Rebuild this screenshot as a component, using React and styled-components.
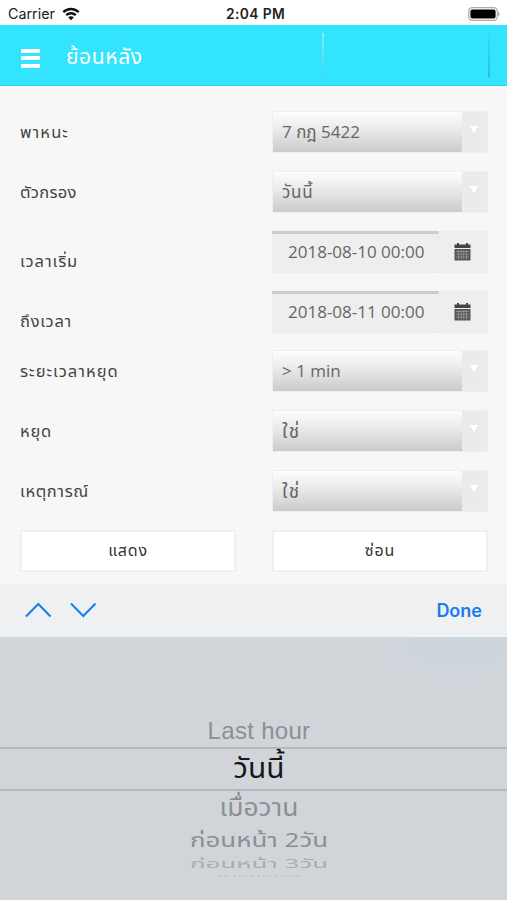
import React from "react";
import styled, { createGlobalStyle } from "styled-components";

const GlobalStyle = createGlobalStyle`
  * {
    box-sizing: border-box;
  }
  body {
    margin: 0;
    background: #f7f7f7;
    overflow: hidden;
  }
`;

const Screen = styled.div`
  display: flex;
  flex-direction: column;
  width: 507px;
  height: 900px;
  overflow: hidden;
  background: #f7f7f7;
  font-family: "Open Sans", "Noto Sans Thai", sans-serif;
`;

const StatusBar = styled.div`
  display: grid;
  grid-template-columns: 1fr auto 1fr;
  align-items: center;
  height: 25px;
  padding: 2px 7px 0 8px;
  background: #fff;
  color: #222;
  font-family: Inter, sans-serif;
  font-size: 14.3px;
  line-height: 20px;
`;

const Carrier = styled.div`
  display: flex;
  align-items: center;
  gap: 7px;
`;

const Clock = styled.div`
  padding-left: 3px;
  font-size: 13.8px;
  font-weight: 600;
  letter-spacing: 0.4px;
`;

const Battery = styled.svg`
  justify-self: end;
`;

const Header = styled.header`
  display: flex;
  align-items: center;
  height: 61px;
  padding: 0 17px 0 21px;
  background: #33e4ff;
  border-bottom: 1px solid #27d3ef;
`;

const MenuButton = styled.div`
  display: flex;
  flex-direction: column;
  gap: 3.5px;
  margin-top: 6px;

  span {
    width: 19px;
    height: 4px;
    background: #fff;
  }
`;

const Title = styled.h1`
  flex: 1;
  margin: 4px 0 0 26px;
  color: #fff;
  font-size: 21px;
  font-weight: 400;
  letter-spacing: 0.6px;
`;

const Divider = styled.span`
  width: 2px;
  height: 44px;
  margin-right: ${(props) => props.$gap || 0}px;
  background: linear-gradient(${(props) => props.$from}, ${(props) => props.$to});
`;

const Form = styled.main`
  height: 498px;
  padding: 25px 19px 0 20px;
`;

const Row = styled.div`
  display: grid;
  grid-template-columns: 216px 216px;
  column-gap: 36px;
  height: 59.85px;
`;

const Label = styled.label`
  padding-top: ${(props) => (props.$low ? 18 : 9)}px;
  color: #444;
  font-size: 16.5px;
  letter-spacing: ${(props) => props.$tracking}px;
  line-height: 24px;
  white-space: nowrap;
`;

const SelectBox = styled.div`
  display: flex;
  height: 42px;
  background: #ebebeb;
  border: 1px solid #efefef;
`;

const SelectValue = styled.div`
  width: 189px;
  padding-left: 9px;
  background: linear-gradient(#fdfdfd, #e9e9e9 45%, #cbcbcb);
  color: #666;
  font-size: ${(props) => props.$size || 17}px;
  letter-spacing: ${(props) => props.$tracking || 0}px;
  line-height: 40px;
`;

const Arrow = styled.svg`
  margin: 14px 0 0 6px;
`;

const DateBox = styled.div`
  display: flex;
  height: 42px;
  background: #eee;
`;

const DateValue = styled.div`
  width: 167px;
  padding-left: 16px;
  background: #eee;
  border-top: 3px solid #ccc;
  border-right: 1px solid #eaeaea;
  color: #666;
  font-size: 17px;
  line-height: 35px;
  white-space: nowrap;

  span {
    display: block;
    width: 137px;
    overflow: hidden;
  }
`;

const Calendar = styled.svg`
  margin: 11px 0 0 15px;
`;

const Button = styled.button`
  height: 42px;
  padding: 0;
  background: #fff;
  border: 2px solid #f0f0f0;
  color: #333;
  font-family: inherit;
  font-size: 16px;
  letter-spacing: 0.8px;
`;

const Toolbar = styled.div`
  display: flex;
  align-items: center;
  height: 53px;
  padding: 0 25px;
  background: #eef0f2;
  color: #1a7cee;
`;

const Chevron = styled.svg`
  margin: -2px 18px 0 0;
`;

const Done = styled.div`
  margin-left: auto;
  font-family: Inter, sans-serif;
  font-size: 18px;
  font-weight: 600;
`;

const Picker = styled.div`
  display: flex;
  flex-direction: column;
  align-items: center;
  flex: 1;
  padding-top: 78px;
  background:
    radial-gradient(ellipse 100px 50px at 460px 0, #cad5dd, transparent),
    #d1d5da;
`;

const Option = styled.div`
  display: flex;
  align-items: center;
  justify-content: center;
  width: 100%;
  height: ${(props) => props.$height}px;
  padding-left: 11px;
  color: ${(props) => props.$color || "#8b8f94"};
  font-size: ${(props) => props.$size}px;
  white-space: nowrap;

  span {
    transform: scale(${(props) => props.$x || 1}, ${(props) => props.$y || 1});
  }
`;

const Latin = styled(Option)`
  font-family: "Liberation Sans", Arial, sans-serif;
  letter-spacing: 0.3px;
`;

const Selected = styled(Option)`
  border-top: 2px solid #b5b8be;
  border-bottom: 2px solid #b5b8be;
`;

const Select = ({ value, size, tracking }) => (
  <SelectBox>
    <SelectValue $size={size} $tracking={tracking}>
      {value}
    </SelectValue>
    <Arrow width="12" height="12" viewBox="0 0 12 12">
      <path d="M1.5 1H10.5L6 9Z" fill="#dcdcdc" />
      <path d="M1.5 0H10.5L6 8Z" fill="#fff" />
    </Arrow>
  </SelectBox>
);

const DateInput = ({ value }) => (
  <DateBox>
    <DateValue>
      <span>{value}</span>
    </DateValue>
    <Calendar width="17" height="19" viewBox="0 0 17 19">
      <path d="M0.5 2.5H3V1H5V2.5H12V1H14V2.5H16.5V6H0.5Z" fill="#444" />
      <path d="M0.5 7H16.5V18.5H0.5Z" fill="#555" />
      <path
        d="M2 9.5H15M2 12.2H15M2 15H15M4.5 8V17.5M7.2 8V17.5M9.8 8V17.5M12.5 8V17.5"
        stroke="#aaa"
        strokeWidth="0.6"
      />
    </Calendar>
  </DateBox>
);

const fields = [
  { label: "พาหนะ", tracking: 1.1, value: "7 กฎ 5422" },
  { label: "ตัวกรอง", tracking: 0.3, value: "วันนี้", spread: 0.7 },
  { label: "เวลาเริ่ม", tracking: 0.9, value: "2018-08-10 00:00", date: true },
  { label: "ถึงเวลา", tracking: 0.7, value: "2018-08-11 00:00", date: true },
  { label: "ระยะเวลาหยุด", tracking: 1, value: "> 1 min" },
  { label: "หยุด", tracking: 0.7, value: "ใช่", size: 19, spread: 1.5 },
  { label: "เหตุการณ์", tracking: 0.6, value: "ใช่", size: 19, spread: 1.5 },
];

const App = () => (
  <>
    <GlobalStyle />
    <Screen>
      <StatusBar>
        <Carrier>
          Carrier
          <svg width="18" height="14" viewBox="0 0 18 14">
            <g fill="none" stroke="#111" strokeWidth="2.4">
              <path d="M1.3 5.2C5.6 0.9 12.4 0.9 16.7 5.2" />
              <path d="M4.2 8.2C6.9 5.6 11.1 5.6 13.8 8.2" />
            </g>
            <path d="M6.2 10.3C7.8 8.9 10.2 8.9 11.8 10.3L9 13.2Z" fill="#111" />
          </svg>
        </Carrier>
        <Clock>2:04 PM</Clock>
        <Battery width="32" height="14" viewBox="0 0 32 14">
          <rect x="0.7" y="0.7" width="28.6" height="12.6" rx="3.6" fill="#fff" stroke="#aaa" strokeWidth="1.2" />
          <rect x="2.4" y="2.4" width="25.2" height="9.2" rx="2" fill="#000" />
          <path d="M30.3 4.8C32 5.5 32 8.5 30.3 9.2Z" fill="#999" />
        </Battery>
      </StatusBar>

      <Header>
        <MenuButton>
          <span />
          <span />
          <span />
        </MenuButton>
        <Title>ย้อนหลัง</Title>
        <Divider $gap={164} $from="#7deeff" $to="#4ad4ea" />
        <Divider $from="#33e0fa" $to="#2bbdd4" />
      </Header>

      <Form>
        {fields.map((field) => (
          <Row key={field.label}>
            <Label $low={field.date} $tracking={field.tracking}>
              {field.label}
            </Label>
            {field.date ? (
              <DateInput value={field.value} />
            ) : (
              <Select value={field.value} size={field.size} tracking={field.spread} />
            )}
          </Row>
        ))}
        <Row>
          <Button>แสดง</Button>
          <Button>ซ่อน</Button>
        </Row>
      </Form>

      <Toolbar>
        <Chevron width="27" height="16" viewBox="0 0 27 16">
          <path d="M1 14.5L13.3 2L25.5 14.5" fill="none" stroke="currentColor" strokeWidth="2" />
        </Chevron>
        <Chevron width="27" height="16" viewBox="0 0 27 16">
          <path d="M1 1.5L13.3 14L25.5 1.5" fill="none" stroke="currentColor" strokeWidth="2" />
        </Chevron>
        <Done>Done</Done>
      </Toolbar>

      <Picker>
        <Latin $height={32} $size={24}>
          <span>Last hour</span>
        </Latin>
        <Selected $height={44} $size={29} $x={1.03} $color="#16181b">
          <span>วันนี้</span>
        </Selected>
        <Option $height={34} $size={24} $x={1.1}>
          <span>เมื่อวาน</span>
        </Option>
        <Option $height={30} $size={24} $x={1.08} $y={0.8}>
          <span>ก่อนหน้า 2วัน</span>
        </Option>
        <Option $height={18} $size={24} $x={1.08} $y={0.5} $color="#a9adb2">
          <span>ก่อนหน้า 3วัน</span>
        </Option>
        <Option $height={6} $size={20} $y={0.2} $color="#c0c4c9">
          <span>กำหนดเอง</span>
        </Option>
      </Picker>
    </Screen>
  </>
);

export default App;
